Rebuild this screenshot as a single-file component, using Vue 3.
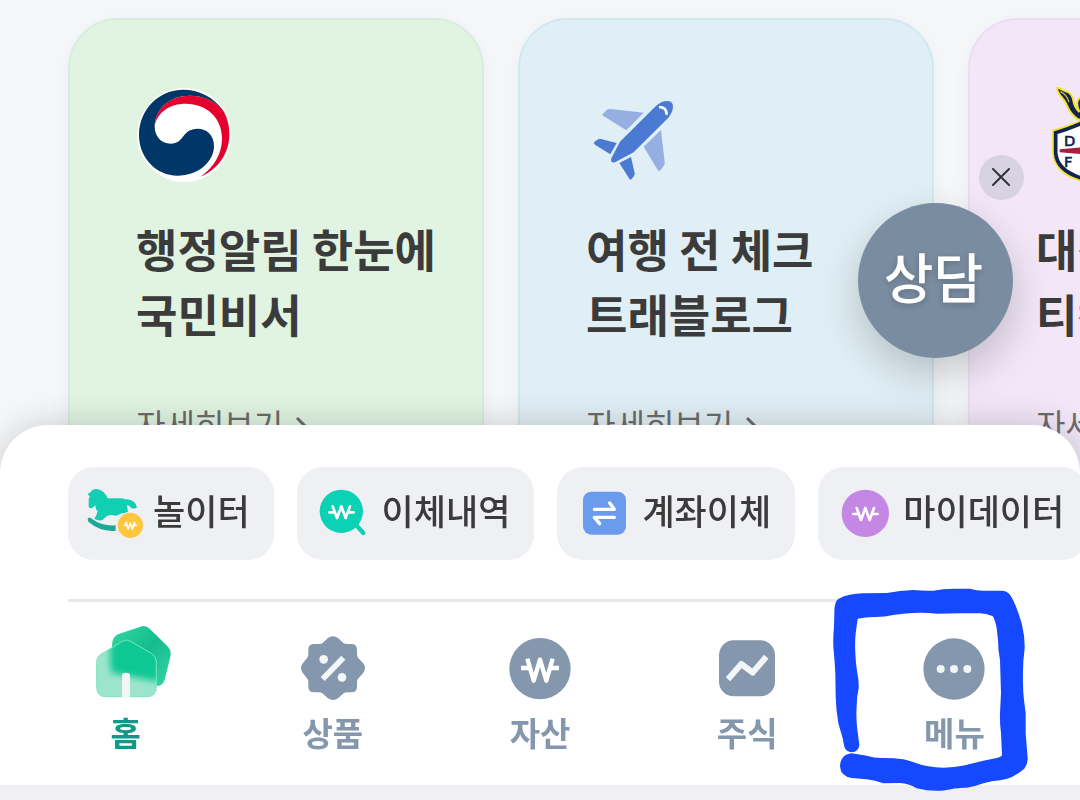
<script setup>
import { ref } from 'vue'

const cards = [
    { id: 'gov', lines: ['행정알림 한눈에', '국민비서'] },
    { id: 'travel', lines: ['여행 전 체크', '트래블로그'] },
    { id: 'ticket', lines: ['대전하나', '티켓예매'] },
]

const shortcuts = [
    { id: 'play', name: '놀이터' },
    { id: 'history', name: '이체내역' },
    { id: 'transfer', name: '계좌이체' },
    { id: 'mydata', name: '마이데이터' },
]

const tabs = [
    { id: 'home', name: '홈' },
    { id: 'product', name: '상품' },
    { id: 'asset', name: '자산' },
    { id: 'stock', name: '주식' },
    { id: 'menu', name: '메뉴' },
]

const activeTab = ref('home')
const showConsult = ref(true)
</script>

<template>
    <div class="page">
        <main class="cards">
            <article v-for="{ id, lines } in cards" :key="id" class="card" :class="id">
                <svg v-if="id === 'gov'" class="card-icon" viewBox="258 261 288 288" aria-hidden="true">
                    <circle cx="403" cy="405" r="141" fill="#fff" />
                    <path d="M519 331C490 290 445 269 400 269C325 269 267 330 267 405C267 475 320 527 382 527C445 527 492 485 492 438C492 405 470 386 443 386C395 386 404 431 362 431C332 431 314 408 314 378C316 325 360 287 420 287C460 287 495 303 519 331Z" fill="#003668" />
                    <path d="M314 378C316 325 360 287 420 287C460 287 500 305 519 331C532 352 538 377 538 405C538 458 505 508 452 530C492 502 516 462 516 415C516 352 468 311 408 311C358 311 323 336 314 378Z" fill="#e6002d" />
                </svg>
                <svg v-else-if="id === 'travel'" class="card-icon" viewBox="258 261 288 288" aria-hidden="true">
                    <g fill="#95afe3">
                        <path d="M308 342L321 329Q326 326 333 327L431 338L379 391L309 347Q306 345 308 342Z" />
                        <path d="M431 440L483 390L494 487Q495 493 491 498L481 511Q477 516 473 510Z" />
                    </g>
                    <g fill="#4b7ad2">
                        <path d="M334 475L360 425L467 319Q484 302 505 303Q518 304 519 319Q519 336 505 353L401 457L345 487Q331 491 334 475Z" />
                        <path d="M283 426L294 418Q298 416 303 417L350 429L331 463L285 434Q279 430 283 426Z" />
                        <path d="M358 489L393 471L404 520Q405 524 402 528L395 537Q391 541 388 536Z" />
                    </g>
                    <path d="M477 321C493 321 500 328 500 344" fill="none" stroke="#fff" stroke-width="8" />
                </svg>
                <svg v-else class="card-icon" viewBox="648 81 288 288" aria-hidden="true">
                    <path d="M711 81Q724 90 741 95Q757 102 760 122Q763 142 778 156Q768 132 774 120Q779 111 795 110V184L774 178Q752 162 744 143Q737 124 724 110Q712 99 711 81Z" fill="#102451" stroke="#f5e12b" stroke-width="6" />
                    <path d="M721 95Q739 102 747 126" fill="none" stroke="#c7b94d" stroke-width="4" />
                    <path d="M700 212Q740 202 790 180Q840 202 880 212V280Q872 338 790 364Q704 340 700 279Z" fill="#fff" stroke="#f5e12b" stroke-width="7" />
                    <path d="M707 218Q745 208 790 188Q835 208 873 218V279Q866 331 790 356Q711 333 707 279Z" fill="#fff" stroke="#102451" stroke-width="11" />
                    <path d="M719 268L800 261V284L719 277Z" fill="#a52041" />
                    <g class="crest-text">
                        <text x="732" y="257">D</text>
                        <text x="732" y="321">F</text>
                    </g>
                </svg>
                <h2><span v-for="line in lines" :key="line">{{ line }}</span></h2>
                <a href="#" class="more">
                    자세히보기
                    <svg viewBox="0 0 14 24" aria-hidden="true"><path d="M2 4L10 12L2 20" /></svg>
                </a>
            </article>
        </main>

        <aside v-if="showConsult" class="consult">
            <button type="button" class="close" aria-label="닫기" @click="showConsult = false">
                <svg viewBox="0 0 18 18" aria-hidden="true"><path d="M1 1L17 17M17 1L1 17" /></svg>
            </button>
            <button type="button" class="consult-button">상담</button>
        </aside>

        <footer class="sheet">
            <div class="shortcuts">
                <button v-for="{ id, name } in shortcuts" :key="id" type="button" class="shortcut">
                    <svg v-if="id === 'play'" viewBox="270 271 144 144" aria-hidden="true">
                        <path d="M264 356Q268 351 275 357Q307 380 347 377V393Q303 398 266 367Q261 361 264 356Z" fill="#20a897" />
                        <path d="M264 282L272 277Q276 268 290 268Q314 272 323 296H367Q374 300 380 299Q407 301 411 324Q403 328 393 325L389 319L381 316L384 339L366 341Q350 348 347 348Q324 340 308 361Q298 365 283 358Q291 344 293 334Q285 329 287 316L280 323Q270 329 266 321V299L270 289Q264 289 264 282Z" fill="#12cfb4" />
                        <circle cx="391" cy="377" r="41" fill="#eef0f4" />
                        <circle cx="391" cy="377" r="38" fill="#ffc63e" />
                        <path d="M373 377H381M401 377H409M378 368L385 388L391 370L397 388L404 368" class="won won-small" />
                    </svg>
                    <svg v-else-if="id === 'history'" viewBox="954 270 144 144" aria-hidden="true">
                        <path d="M1066 376L1087 399" stroke="#11cfb4" stroke-width="13" stroke-linecap="round" />
                        <circle cx="1021" cy="334" r="65" fill="#0bd1b5" />
                        <path d="M985 337H1002M1040 337H1058M995 319L1008 354L1021 319L1034 354L1047 319" class="won" />
                    </svg>
                    <svg v-else-if="id === 'transfer'" viewBox="537 150 144 144" aria-hidden="true">
                        <rect x="549" y="155" width="129" height="129" rx="25" fill="#6a9bec" />
                        <path d="M583 208H643L629 189M643 232H583L599 251" class="arrows" />
                    </svg>
                    <svg v-else viewBox="120 270 144 144" aria-hidden="true">
                        <circle cx="196" cy="340" r="71" fill="#c587e4" />
                        <path d="M160 342H177M215 342H233M170 324L183 360L196 324L209 360L222 324" class="won" />
                    </svg>
                    <span>{{ name }}</span>
                </button>
            </div>

            <nav class="tabs">
                <a v-for="{ id, name } in tabs" :key="id" href="#" class="tab" :class="{ active: activeTab === id }"
                    @click.prevent="activeTab = id">
                    <svg v-if="id === 'home'" class="tab-icon" viewBox="102 138 192 192" aria-hidden="true">
                        <defs>
                            <linearGradient id="leafBack" x1="0" y1="0" x2="1" y2="1">
                                <stop offset="0" stop-color="#35d99f" />
                                <stop offset="0.5" stop-color="#13bc8f" />
                                <stop offset="1" stop-color="#3bd5a6" />
                            </linearGradient>
                            <clipPath id="houseClip">
                                <path d="M187 154Q199 146 212 154L274 190Q289 199 289 214V290Q289 320 260 320H138Q110 320 110 290V217Q110 201 123 193Z" />
                            </clipPath>
                            <filter id="frost" x="-30%" y="-30%" width="160%" height="160%">
                                <feGaussianBlur stdDeviation="9" />
                            </filter>
                        </defs>
                        <path d="M174 133L241 110Q257 104 269 116L324 170Q334 181 332 195L315 267Q310 284 296 288L176 256Q150 230 157 155Q161 139 174 133Z" fill="url(#leafBack)" />
                        <g clip-path="url(#houseClip)">
                            <rect x="105" y="145" width="190" height="180" fill="#9ce5cc" />
                            <path d="M154 133H300V276L155 248Q146 220 154 133Z" fill="#10c893" filter="url(#frost)" />
                        </g>
                        <path d="M187 154Q199 146 212 154L274 190Q289 199 289 214V290Q289 320 260 320H138Q110 320 110 290V217Q110 201 123 193Z" fill="none" stroke="#75e5bd" stroke-width="3" />
                        <path d="M186 321V257Q186 248 198 248Q210 248 210 257V321Z" fill="#f2f5f4" />
                    </svg>
                    <svg v-else-if="id === 'product'" class="tab-icon" viewBox="723 138 192 192" aria-hidden="true">
                        <path d="M803 145Q819 133 835 145L851 160Q855 162 861 162H874Q891 162 891 179V192Q891 198 894 203L909 219Q921 234 909 250L894 266Q891 270 891 276V290Q891 307 874 307H861Q855 307 851 310L835 324Q819 336 803 324L787 310Q783 307 777 307H762Q745 307 745 290V276Q745 270 742 266L729 250Q717 234 729 219L742 203Q745 198 745 192V179Q745 162 762 162H777Q783 162 787 160Z" fill="#8497ad" />
                        <path d="M850 203L788 267" stroke="#f3f6f9" stroke-width="17" />
                        <circle cx="791" cy="208" r="13" fill="#f3f6f9" />
                        <circle cx="846" cy="262" r="13" fill="#f3f6f9" />
                    </svg>
                    <svg v-else-if="id === 'asset'" class="tab-icon" viewBox="204 138 192 192" aria-hidden="true">
                        <circle cx="300" cy="236" r="92" fill="#8497ad" />
                        <path d="M243 234H270M330 234H357M262 206L281 272L300 209L319 272L338 206" class="won won-large" />
                    </svg>
                    <svg v-else-if="id === 'stock'" class="tab-icon" viewBox="825 138 192 192" aria-hidden="true">
                        <rect x="837" y="151" width="168" height="168" rx="44" fill="#8497ad" />
                        <path d="M870 261L904 222L938 248L973 207" fill="none" stroke="#f3f6f8" stroke-width="18" stroke-linecap="square" stroke-linejoin="round" />
                    </svg>
                    <svg v-else class="tab-icon" viewBox="366 708 192 192" aria-hidden="true">
                        <circle cx="462" cy="807" r="92" fill="#8497ad" />
                        <g fill="#f1f6fb">
                            <circle cx="422" cy="807" r="12" />
                            <circle cx="462" cy="807" r="12" />
                            <circle cx="502" cy="807" r="12" />
                        </g>
                    </svg>
                    <span>{{ name }}</span>
                    <!-- pen mark around the menu tab -->
                    <svg v-if="id === 'menu'" class="marker" viewBox="90 555 600 630" aria-hidden="true">
                        <path d="M103 640Q102 605 116 596Q145 581 190 580L260 579Q300 571 340 570Q370 573 400 572Q430 566 460 566L510 566Q530 572 550 572L605 572Q622 572 632 587Q648 612 665 670Q675 710 674 745Q668 790 669 830Q668 865 672 900L677 940V1000L683 1075Q684 1090 673 1106Q640 1135 600 1141Q575 1143 550 1150Q525 1160 500 1163Q465 1164 440 1170Q400 1177 350 1165Q325 1150 300 1149L250 1150Q225 1141 200 1138L155 1134Q121 1128 120 1098Q122 1063 155 1060L200 1067Q225 1075 250 1074Q280 1074 310 1078Q330 1082 350 1090Q380 1102 430 1103Q475 1102 510 1092L550 1082L590 1074Q606 1070 606 1065L603 1000Q599 970 600 940L603 880L600 780Q594 750 594 720L590 685Q583 651 577 648Q558 641 540 640H480L410 641Q375 637 340 639Q310 641 280 645Q250 652 220 651Q196 651 173 656L167 700Q164 730 166 760Q167 790 172 820Q177 843 176 865Q170 890 170 920Q168 950 171 980L178 1035Q176 1056 155 1057Q138 1055 133 1040L128 1015L115 970Q108 930 107 890L106 820Q104 780 100 740Q99 710 102 680Z" />
                    </svg>
                </a>
            </nav>
        </footer>
    </div>
</template>

<style>
body {
    margin: 0;
    background: #f5f7f9;
}
</style>

<style scoped>
.page {
    min-height: 100vh;
    overflow: hidden;
    color: #3b3b3b;
    font-family: 'Noto Sans CJK KR', 'Noto Sans', sans-serif;
}

button {
    border: 0;
    font-family: inherit;
    cursor: pointer;
}

a {
    text-decoration: none;
}

.cards {
    display: flex;
    gap: 34px;
    padding: 18px 68px 300px;
}

.card {
    display: flex;
    flex: 0 0 416px;
    flex-direction: column;
    align-items: flex-start;
    box-sizing: border-box;
    padding: 67px 0 67px 66px;
    border: 2px solid #d9ecdf;
    border-radius: 50px;
    background: #e0f4e1;
    box-shadow: 0 4px 24px rgba(60, 70, 100, 0.04);
}

.card.travel {
    border-color: #d1e8ed;
    background: #e0eff5;
}

.card.ticket {
    border-color: #eadff1;
    background: #f2e6f7;
}

.card-icon {
    width: 96px;
    height: 96px;
}

.crest-text {
    fill: #102451;
    stroke: #102451;
    stroke-width: 2;
    font-family: 'DejaVu Sans', sans-serif;
    font-size: 44px;
}

h2 {
    margin: 33px 0 0;
    font-size: 45px;
    font-weight: 700;
    line-height: 65px;
    white-space: nowrap;
}

h2 span {
    display: block;
}

.more {
    display: flex;
    align-items: center;
    gap: 12px;
    margin-top: 55px;
    color: #6b6b6b;
    font-size: 32px;
    line-height: 44px;
}

.more svg {
    width: 14px;
    height: 24px;
    margin-top: 6px;
    fill: none;
    stroke: currentColor;
    stroke-width: 3;
}

.consult {
    position: fixed;
    top: 155px;
    right: 56px;
    display: flex;
    flex-direction: column;
    gap: 3px;
    width: 166px;
}

.close {
    display: grid;
    place-items: center;
    align-self: flex-end;
    width: 45px;
    height: 45px;
    padding: 0 2px 2px 0;
    border-radius: 50%;
    background: #d8d3e1;
}

.close svg {
    width: 18px;
    height: 18px;
    fill: none;
    stroke: #333;
    stroke-width: 2;
    stroke-linecap: round;
}

.consult-button {
    width: 155px;
    height: 155px;
    padding: 0 4px 10px 0;
    border-radius: 50%;
    background: #798ca0;
    color: #fff;
    font-size: 54px;
    font-weight: 500;
    line-height: 80px;
    text-shadow: 0 2px 6px rgba(0, 0, 0, 0.2);
    box-shadow: 0 16px 40px rgba(0, 0, 0, 0.2);
}

.sheet {
    position: fixed;
    right: 0;
    bottom: 0;
    left: 0;
    overflow: hidden;
    padding-top: 42px;
    border-radius: 48px 48px 0 0;
    background: #fff;
    box-shadow: 0 0 36px rgba(0, 0, 0, 0.18);
}

.sheet::after {
    content: '';
    display: block;
    height: 15px;
    background: #f0f0f2;
}

.shortcuts {
    display: flex;
    gap: 23px;
    padding-left: 68px;
}

.shortcut {
    display: flex;
    flex-shrink: 0;
    align-items: center;
    gap: 15px;
    height: 93px;
    padding: 0 24px 0 22px;
    border-radius: 26px;
    background: #eef0f4;
    color: #3b3b3b;
    font-size: 35px;
    font-weight: 500;
    line-height: 48px;
    white-space: nowrap;
}

.shortcut svg {
    overflow: visible;
    width: 48px;
    height: 48px;
}

.shortcut span {
    padding-bottom: 8px;
}

.won {
    fill: none;
    stroke: #fff;
    stroke-width: 8;
    stroke-linecap: round;
    stroke-linejoin: round;
}

.won-small {
    stroke-width: 5;
}

.won-large {
    stroke-width: 13;
    stroke-linecap: butt;
}

.arrows {
    fill: none;
    stroke: #fff;
    stroke-width: 10;
    stroke-linecap: round;
    stroke-linejoin: round;
}

.tabs {
    display: grid;
    grid-template-columns: repeat(5, 1fr);
    padding: 0 22px 33px;
}

.tabs::before {
    content: '';
    grid-column: 1 / -1;
    height: 3px;
    margin: 39px 46px 34px;
    background: #e8e8e9;
}

.tab {
    position: relative;
    display: flex;
    flex-direction: column;
    align-items: center;
    gap: 12px;
    color: #8497ad;
    font-size: 33px;
    font-weight: 700;
    line-height: 40px;
}

.tab.active {
    color: #149787;
}

.tab-icon {
    overflow: visible;
    width: 64px;
    height: 64px;
}

.marker {
    position: absolute;
    top: -51px;
    left: -21px;
    width: 200px;
    height: 210px;
    fill: #1548ff;
    pointer-events: none;
}
</style>
